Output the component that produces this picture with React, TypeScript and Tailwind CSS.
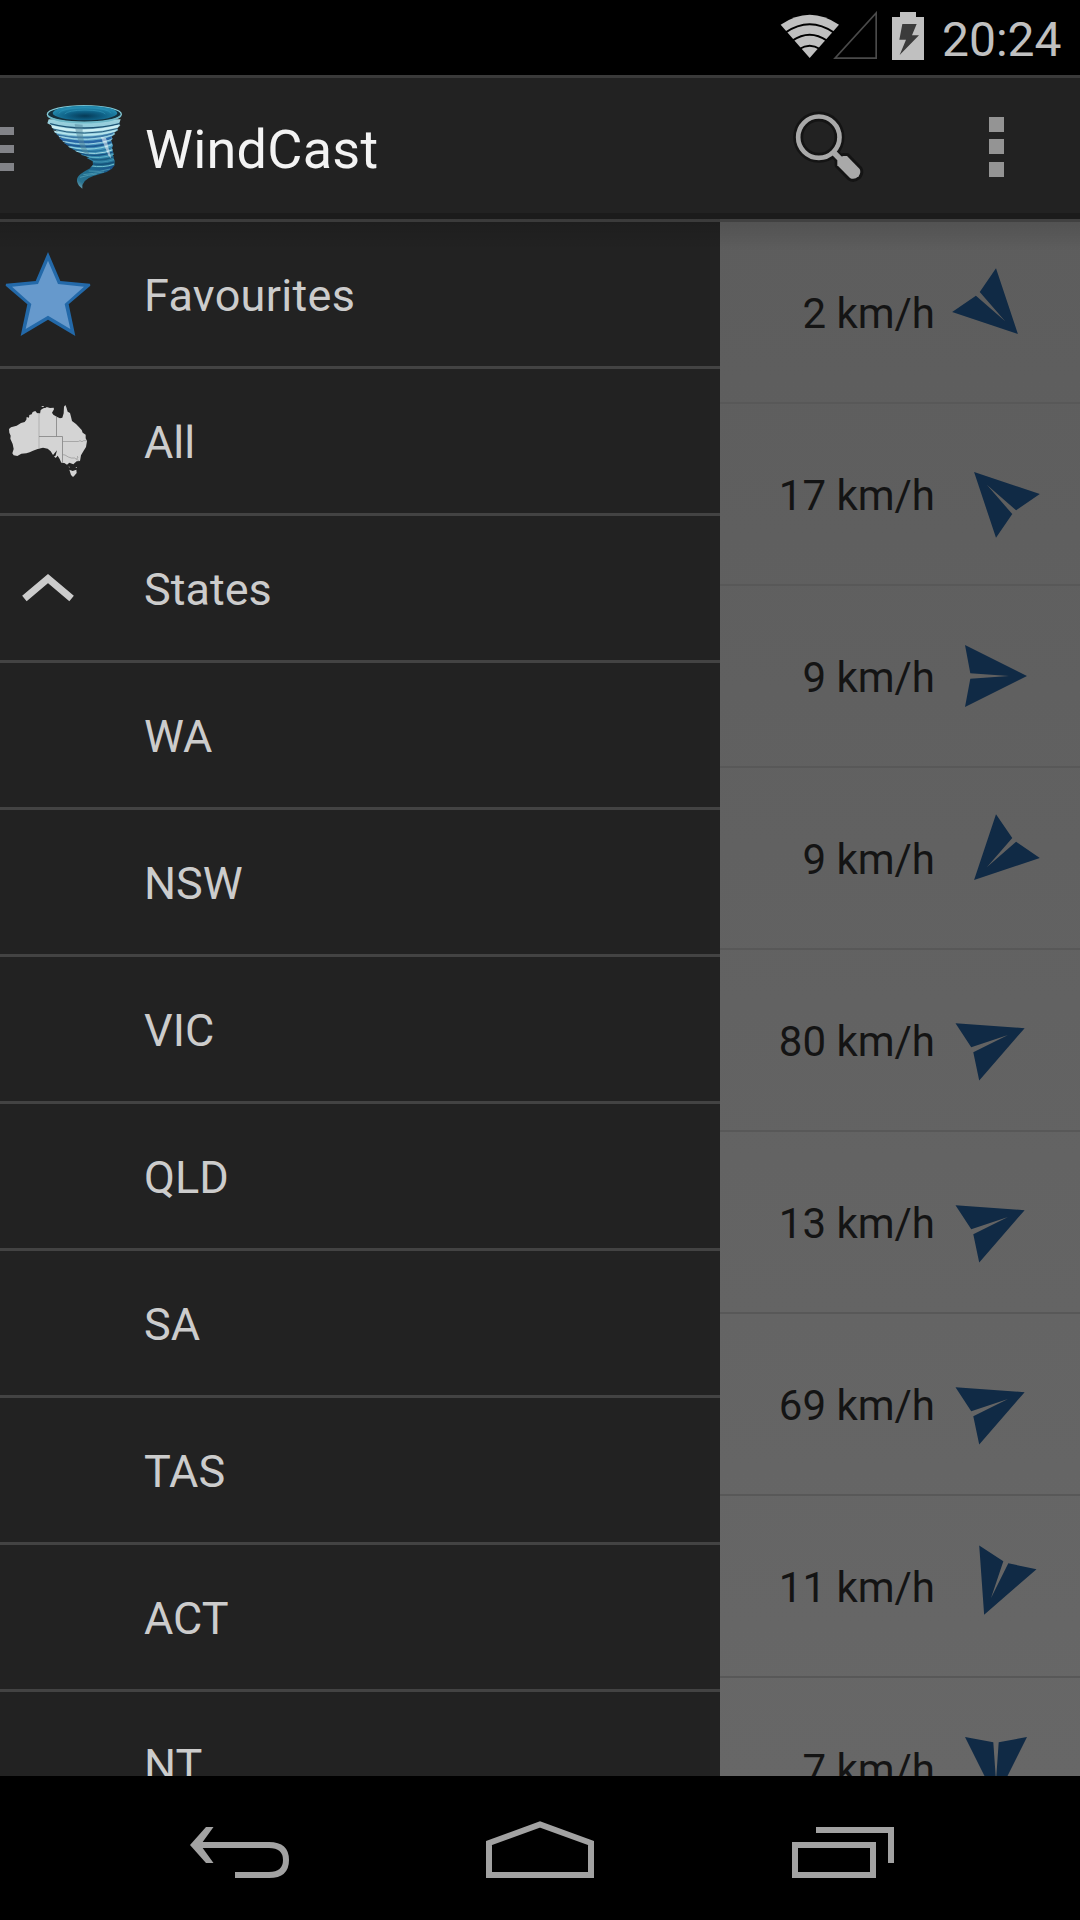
import React from "react";

const drawerItems = ["Favourites", "All", "States", "WA", "NSW", "VIC", "QLD", "SA", "TAS", "ACT", "NT"];

// Angles are clockwise degrees from an arrow that points right.
const winds = [
  { speed: 2, angle: 45 },
  { speed: 17, angle: 225 },
  { speed: 9, angle: 0 },
  { speed: 9, angle: 135 },
  { speed: 80, angle: -22.5 },
  { speed: 13, angle: -22.5 },
  { speed: 69, angle: -22.5 },
  { speed: 11, angle: 112.5 },
  { speed: 7, angle: 90 },
];

function StarIcon() {
  return (
    <svg className="h-[86px] w-[86px]" viewBox="15 123 258 258">
      <path fill="#2369a9" d="M144 126 181 213 270 221 271 227 206 283 226 378 144 329 62 378 82 283 17 227 18 221 107 213Z" />
      <path fill="#6699cc" d="M144 152 174 222 252 230 194 282 211 357 144 317 77 357 94 282 36 230 114 222Z" />
    </svg>
  );
}

function AustraliaIcon() {
  return (
    <svg className="h-[74px] w-[80px]" viewBox="24 582 240 222">
      <path
        fill="#d4d4d4"
        d="M27 657 33 652 50 647 63 639 74 636 79 629 80 621 87 623 88 615 95 613 98 606 106 603 111 609 120 611 122 600 130 595 138 593 140 591 150 594 161 593 162 598 156 608 160 614 170 620 180 625 187 623 191 610 192 590 196 585 199 592 203 605 210 609 213 620 216 633 228 642 236 650 245 660 248 668 257 674 257 685 261 693 258 711 251 722 243 736 240 753 230 754 220 763 208 758 201 764 193 759 184 758 179 747 173 737 165 743 169 728 171 721 159 735 152 724 143 716 129 713 113 717 99 722 89 727 79 730 64 731 52 738 41 736 37 730 41 717 38 702 31 686 32 677 28 668Z"
      />
      <path fill="#d4d4d4" d="M208 779 218 783 229 779 230 789 223 797 219 801 213 795ZM162 739 168 737 172 740 166 743ZM125 589 131 588 131 591 125 591ZM205 770 209 770 209 773ZM228 771 230 771 230 774 227 774Z" />
      <path fill="none" stroke="#bfbfbf" strokeWidth="5" d="M117 610V714" />
      <path fill="none" stroke="#848484" strokeWidth="2.500" d="M169.500 620V679M117 679.500H187.500V758" />
      <path fill="none" stroke="#8f8f8f" strokeWidth="2" d="M187 694.500H235L240 692 246 695 251 692 260 692M187 734 195 735 205 741 214 744 224 744 229 748 238 752M232 738 234 744 229 746" />
    </svg>
  );
}

function ChevronIcon() {
  return (
    <svg className="h-[28px] w-[52px]" viewBox="0 0 52 28">
      <path fill="none" stroke="#cccccc" strokeWidth="7" d="M2.400 24.500 26 4.600 49.600 24.500" />
    </svg>
  );
}

function TornadoIcon() {
  return (
    <svg className="h-[86px] w-[78px]" viewBox="18 18 234 258">
      <defs>
        <linearGradient id="funnel" x1="0" x2="0" y1="0" y2="1">
          <stop offset="0" stopColor="#9ed3de" />
          <stop offset="0.3" stopColor="#84c3d6" />
          <stop offset="0.5" stopColor="#4f9cc4" />
          <stop offset="0.75" stopColor="#2f83a8" />
          <stop offset="1" stopColor="#1c6488" />
        </linearGradient>
        <linearGradient id="tail" x1="1" x2="0" y1="0" y2="1">
          <stop offset="0" stopColor="#174f8c" />
          <stop offset="0.45" stopColor="#1f6c8e" />
          <stop offset="0.8" stopColor="#2a7390" />
          <stop offset="1" stopColor="#7fb0bd" />
        </linearGradient>
        <radialGradient id="mouth" cx="0.5" cy="0.7" r="0.55">
          <stop offset="0" stopColor="#063a56" />
          <stop offset="0.5" stopColor="#0e5f84" />
          <stop offset="1" stopColor="#2187ac" />
        </radialGradient>
        <clipPath id="body">
          <path d="M22 60H244L240 76 229 96 216 110 214 125 216 148 222 176 223 204Q190 216 151 209L159 200 160 188 146 178 116 164 88 148 66 128 42 100Z" />
        </clipPath>
      </defs>
      <path fill="url(#funnel)" d="M26 64H242L237 78 241 82 231 92 235 96 222 104 226 108 214 116 218 122 213 128 219 142 216 150 221 168 218 174 224 188 223 204Q190 216 151 209L159 200 158 190 140 180 148 178 122 170 128 167 106 160 112 157 86 148 92 145 72 135 78 132 58 120 66 117 42 102 54 102 34 88 42 86 22 76Z" />
      <path fill="url(#tail)" d="M152 207Q190 215 223 202L216 212 200 222 160 234Q124 246 127 272L117 263Q108 250 112 240 116 228 152 210Z" />
      <g clipPath="url(#body)" fill="none">
        <path stroke="#1e5374" strokeWidth="4" d="M26 76Q133 104 242 76" />
        <path stroke="#cdeef3" strokeWidth="7" d="M28 84Q133 112 240 83" />
        <path stroke="#275b7c" strokeWidth="3" d="M28 91Q133 120 240 90" />
        <path stroke="#b9e6ee" strokeWidth="5" d="M36 99Q140 124 236 96" />
        <path stroke="#3a78a6" strokeWidth="5" d="M42 108Q140 132 230 103" />
        <path stroke="#a3d6e6" strokeWidth="3" d="M56 115Q145 136 226 109" />
        <path stroke="#2867a6" strokeWidth="8" d="M54 121Q150 146 222 116" />
        <path stroke="#9ccfe2" strokeWidth="3" d="M66 130Q150 150 220 123" />
        <path stroke="#1d5a94" strokeWidth="6" d="M68 136Q155 158 220 130" />
        <path stroke="#8fd0de" strokeWidth="4" d="M80 145Q158 164 220 138" />
        <path stroke="#26709c" strokeWidth="4" d="M94 153Q165 170 220 147" />
        <path stroke="#a6dae4" strokeWidth="3" d="M104 159Q170 176 222 154" />
        <path stroke="#174f80" strokeWidth="4" d="M116 166Q175 180 222 161" />
        <path stroke="#62b2c8" strokeWidth="3" d="M132 174Q180 186 224 168" />
        <path stroke="#1b5c80" strokeWidth="4" d="M144 181Q185 192 224 176" />
        <path stroke="#4ea3bd" strokeWidth="2" d="M150 188Q185 198 224 184" />
        <path stroke="#145079" strokeWidth="4" d="M150 196Q190 204 224 192" />
        <path stroke="#72c0d0" strokeWidth="3" d="M150 203Q190 211 224 198" />
      </g>
      <path fill="none" stroke="#57a6bc" strokeWidth="2" d="M146 219Q180 224 210 213M130 230Q160 226 192 222M120 238Q145 231 170 228" />
      <path fill="#52869a" fillOpacity="0.5" d="M104 78 128 80Q124 130 150 172L128 162Q108 118 104 78Z" />
      <path fill="#ffffff" fillOpacity="0.5" d="M182 116 198 120 214 182 205 172Z" />
      <ellipse cx="133" cy="49" rx="111" ry="26" fill="#14303c" stroke="#86cbd8" strokeWidth="4" />
      <path fill="none" stroke="#6fb8c8" strokeWidth="5" d="M24 54Q48 73 133 73 218 73 242 54" />
      <ellipse cx="135" cy="45" rx="97" ry="22" fill="url(#mouth)" />
      <path fill="none" stroke="#2f93b5" strokeWidth="2" d="M56 46Q66 30 135 29 204 30 214 46M74 48Q84 37 135 36 188 37 196 48" />
    </svg>
  );
}

function SearchIcon() {
  return (
    <svg className="h-[76px] w-[76px]" viewBox="96 330 228 228">
      <g fill="none" stroke="#141414">
        <circle cx="176.500" cy="414.500" r="62" strokeWidth="30" />
        <path strokeWidth="30" d="M218 458 246 486" />
        <path strokeWidth="18" strokeLinejoin="round" fill="#141414" d="M233 485 250 471 261 471 299 510Q304 520 296 532 282 544 270 537L233 499Z" />
      </g>
      <circle cx="176.500" cy="414.500" r="62" fill="none" stroke="#a9a9a9" strokeWidth="14" />
      <path stroke="#a9a9a9" strokeWidth="17" d="M219 458 246 486" />
      <path fill="#a9a9a9" d="M232 486 236 476 250 471 261 471 299 510Q304 520 296 532 282 544 270 537L232 499Z" />
    </svg>
  );
}

function WifiIcon() {
  return (
    <svg className="h-[44px] w-[60px]" viewBox="60 42 180 132">
      <path fill="#c0c0c0" d="M62 74Q149 14 237 74L149 174Z" />
      <g fill="none" stroke="#000000" strokeWidth="6">
        <path d="M76 98Q149 48 222 98" />
        <path d="M97 122Q149 87 201 122" />
        <path d="M118 147Q149 127 180 147" />
      </g>
    </svg>
  );
}

function SignalIcon() {
  return (
    <svg className="-ml-[7px] h-[48px] w-[44px]" viewBox="219 33 132 144">
      <path fill="none" stroke="#4a4a4a" strokeWidth="5" d="M225 174.500H348.500V39Z" />
    </svg>
  );
}

function BatteryIcon() {
  return (
    <svg className="h-[48px] w-[32px]" viewBox="396 36 96 144">
      <path fill="#c0c0c0" d="M396 51H420V36H468V51H492V180H396Z" />
      <path fill="#3b3b3b" d="M427 72H470L456 106H477L419 165 438 119H418Z" />
    </svg>
  );
}

function WindArrow({ angle }: { angle: number }) {
  return (
    <svg className="h-[62px] w-[62px] overflow-visible" viewBox="-31 -31 62 62">
      <path transform={`rotate(${angle})`} fill="#102a45" d="M-31 -31 31 0 -31 31 -25.700 2.700 13 0 -25.700 -2.700Z" />
    </svg>
  );
}

function StatusBar() {
  return (
    <div className="flex h-[75px] shrink-0 items-start justify-end bg-black pr-[19px]">
      <div className="flex pt-[14px]"><WifiIcon /></div>
      <div className="flex pt-[11px]"><SignalIcon /></div>
      <div className="ml-[15px] flex pt-[12px]"><BatteryIcon /></div>
      <span className="ml-[18px] w-[119px] pt-[12px] text-right text-[48px] leading-[56px] whitespace-nowrap text-[#c0c0c0]">20:24</span>
    </div>
  );
}

function ActionBar() {
  return (
    <header className="flex h-[144px] shrink-0 items-center border-t-[3px] border-b-[6px] border-t-[#3a3a3a] border-b-[#1b1b1b] bg-[#222222]">
      <div className="mt-[7px] flex w-[14px] flex-col gap-[10px]">
        <span className="h-[8px] bg-[#828388]" />
        <span className="h-[8px] bg-[#828388]" />
        <span className="h-[8px] bg-[#828388]" />
      </div>
      <div className="mt-[3px] ml-[32px] flex"><TornadoIcon /></div>
      <h1 className="mt-[8px] ml-[21px] text-[54px] leading-[64px] tracking-[0.250px] text-[#f3f3f3]">WindCast</h1>
      <div className="mt-[3px] ml-auto flex"><SearchIcon /></div>
      <div className="mt-[3px] mr-[76px] ml-[121px] flex w-[15px] flex-col">
        <span className="h-[15px] bg-[#949494]" />
        <span className="mt-[7px] h-[15px] bg-[#949494]" />
        <span className="mt-[8px] h-[15px] bg-[#949494]" />
      </div>
    </header>
  );
}

function Drawer() {
  return (
    <nav className="w-[720px] shrink-0 bg-[#222222] text-[#cccccc]">
      {drawerItems.map((label) => (
        <div key={label} className="flex h-[147px] items-center border-t-[3px] border-[#434343]">
          <div className="flex w-[96px] justify-center">
            {label === "Favourites" && <StarIcon />}
            {label === "All" && <AustraliaIcon />}
            {label === "States" && <ChevronIcon />}
          </div>
          <span
            className={`mt-[4px] ml-[48px] text-[45px] leading-[54px] ${label === "Favourites" ? "tracking-[0.300px]" : "tracking-normal"}`}
          >
            {label}
          </span>
        </div>
      ))}
    </nav>
  );
}

function WindList() {
  return (
    <section className="min-w-0 flex-1 border-t-[3px] border-[#4a4a4a] bg-linear-to-b from-[#5d5d5d] to-[#676767]">
      {winds.map(({ speed, angle }, i) => (
        <div key={i} className="flex h-[182px] items-center justify-end border-b-2 border-[#585858] pr-[53px]">
          <span className="mt-[4px] text-[42px] leading-[50px] whitespace-nowrap text-[#141414]">{speed} km/h</span>
          <div className="ml-[30px] flex"><WindArrow angle={angle} /></div>
        </div>
      ))}
    </section>
  );
}

function NavigationBar() {
  return (
    <footer className="flex h-[144px] shrink-0 items-start bg-black">
      <svg className="mt-[51px] ml-[189px] h-[51px] w-[101px]" viewBox="0 0 101 51" fill="none" stroke="#a2a2a2" strokeWidth="6">
        <path d="M5 18H80Q97 18 97 33T80 48H46" />
        <path fill="#a2a2a2" stroke="none" d="M17 0H24.500L11.500 18 24.500 36H17L1 18Z" />
      </svg>
      <svg className="mt-[45px] ml-[196px] h-[57px] w-[108px]" viewBox="0 0 108 57" fill="none" stroke="#a2a2a2" strokeWidth="6">
        <path d="M3 54V22L54 3.500 105 22V54Z" />
      </svg>
      <svg className="mt-[51px] ml-[198px] h-[51px] w-[102px]" viewBox="0 0 102 51" fill="none" stroke="#a2a2a2" strokeWidth="6">
        <path d="M3 18H81V48H3ZM24 3H99V36" />
      </svg>
    </footer>
  );
}

export default function App() {
  return (
    <div className="flex h-[1920px] w-[1080px] flex-col overflow-hidden bg-black font-['Roboto',sans-serif]">
      <StatusBar />
      <ActionBar />
      <main className="relative flex h-[1557px] shrink-0 items-stretch overflow-hidden">
        <Drawer />
        <WindList />
        <div className="absolute inset-x-0 top-0 h-[32px] bg-linear-to-b from-black/13 to-transparent" />
      </main>
      <NavigationBar />
    </div>
  );
}
